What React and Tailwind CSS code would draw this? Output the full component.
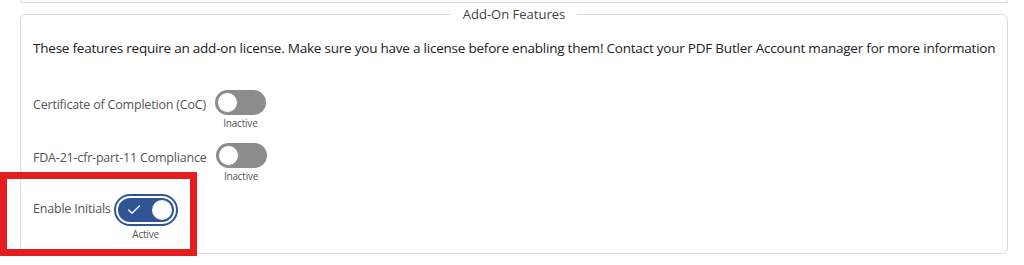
import { Check } from "lucide-react";

function Toggle({ on }) {
  if (on) {
    return (
      <div className="rounded-full border-2 border-[#2f5597] p-[2px]">
        <div className="relative flex h-[24px] w-[56px] items-center rounded-full bg-[#2f5597] px-[5px]">
          <Check className="ml-[3px] h-[16px] w-[16px] text-white" strokeWidth={2} />
          <div className="absolute right-[2px] top-[2px] h-[20px] w-[20px] rounded-full bg-white" />
        </div>
      </div>
    );
  }
  return (
    <div className="relative h-[25px] w-[51px] rounded-full bg-[#8c8c8c]">
      <div className="absolute left-[2px] top-[2px] h-[21px] w-[21px] rounded-full border border-[#8c8c8c] bg-white" />
    </div>
  );
}

function FeatureRow({ label, on, className }) {
  return (
    <div className={`flex items-start ${className}`}>
      <span className="mt-[6px] text-[12.5px] tracking-[-0.2px] text-[#555]">{label}</span>
      <div className={`${on ? "ml-[3px]" : "ml-[9px]"} flex flex-col items-center`}>
        <Toggle on={on} />
        <span className="mt-[1px] text-[10px] leading-[14px] tracking-[-0.2px] text-[#555]">{on ? "Active" : "Inactive"}</span>
      </div>
    </div>
  );
}

export default function App() {
  return (
    <div
      className="relative h-[265px] w-[1024px] overflow-hidden bg-white"
      style={{ fontFamily: '"Open Sans", "Noto Sans", sans-serif' }}
    >
      <div className="ml-[20px] h-[3px] w-[988px] rounded-b-md border-x border-b border-[#dcdcdc]" />

      <fieldset className="ml-[20px] mt-[2px] h-[249px] w-[988px] min-w-0 rounded-md border border-[#dcdcdc] px-[12px]">
        <legend className="mx-auto px-[12px] text-[13px] leading-[18px] text-[#444]">Add-On Features</legend>
        <p className="mt-[15px] text-[13.5px] leading-[20px] tracking-[-0.22px] whitespace-nowrap text-[#222]">
          These features require an add-on license. Make sure you have a license before enabling them! Contact your PDF Butler Account manager for more information
        </p>
        <FeatureRow className="mt-[32px]" label="Certificate of Completion (CoC)" />
        <FeatureRow className="mt-[13px]" label="FDA-21-cfr-part-11 Compliance" />
        <FeatureRow className="mt-[11px]" label="Enable Initials" on />
      </fieldset>

      <div className="absolute left-0 top-[172px] h-[84px] w-[197px] border-[7px] border-[#e41e20]" />
    </div>
  );
}
